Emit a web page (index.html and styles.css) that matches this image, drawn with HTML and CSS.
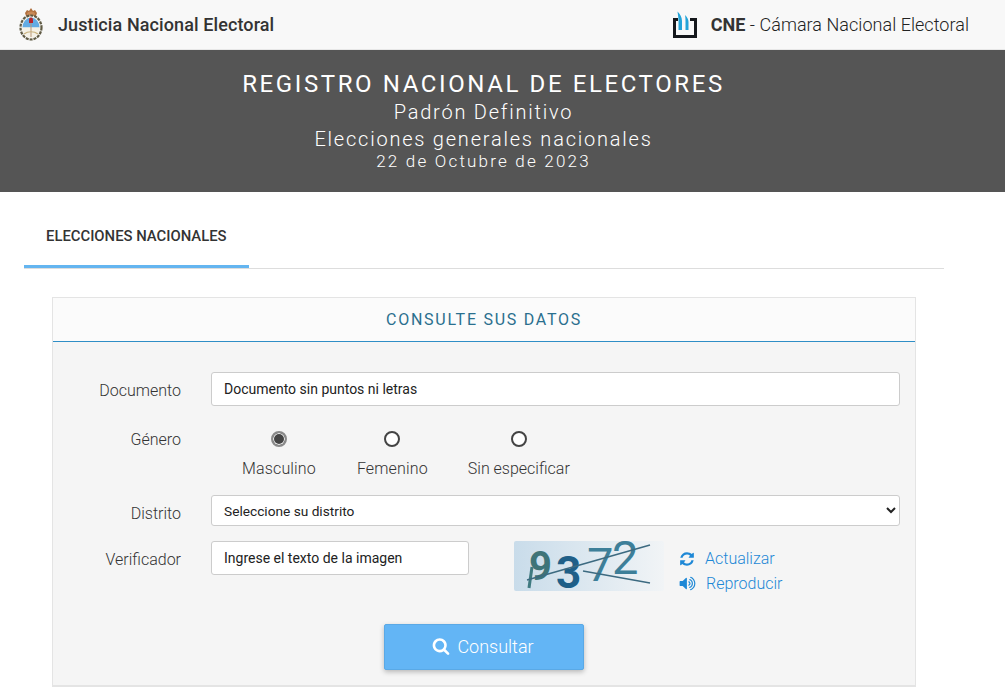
FILE: index.html
```html
<!DOCTYPE html>
<html lang="es">
<head>
    <meta charset="UTF-8">
    <title>Registro Nacional de Electores</title>
    <link rel="stylesheet" href="styles.css">
</head>

<body>

    <header class="topbar">
        <div class="brand">
            <svg class="escudo" viewBox="0 0 24 33" width="24" height="33">
                <!-- sol -->
                <path d="M6 5l2-3 2 1 2-3 2 3 2-1 2 3-1 3H7z" fill="#b0703f"/>
                <ellipse cx="12" cy="6" rx="4" ry="2.500" fill="#c98a58"/>
                <!-- laureles -->
                <ellipse cx="12" cy="19.500" rx="10.500" ry="12" fill="#f6f4ee" stroke="#5f5a44" stroke-width="2.200" stroke-dasharray="3 1"/>
                <path d="M3.500 19.500a8.500 10 0 0 1 17 0z" fill="#62ace4"/>
                <path d="M3.500 19.500a8.500 10 0 0 0 17 0z" fill="#f4f1e6"/>
                <rect x="11.500" y="13" width="1" height="16" fill="#b99a78"/>
                <path d="M10 15v-3.500a2 2 0 0 1 4 0V15z" fill="#b8262c"/>
                <path d="M5 26c4-3 10-3 14 0" fill="none" stroke="#c9b27e" stroke-width="1.200"/>
            </svg>
            <span class="brand-name">Justicia Nacional Electoral</span>
        </div>
        <div class="brand brand-cne">
            <svg class="cne-logo" viewBox="0 0 26 28" width="26" height="28">
                <path d="M6 8.500H2.500V25.500H23.500V8.500H18" fill="none" stroke="#15181c" stroke-width="3"/>
                <path d="M5.500 0.500C8 3 10 6 10 10V19H6.500V10C6.500 7 6 4 5.500 0.500z" fill="#22a3d8"/>
                <path d="M13 4C15 6 16.500 8 16.500 11V19H13.500V11C13.500 9 13.500 6.500 13 4z" fill="#22a3d8"/>
            </svg>
            <span class="cne-name"><b>CNE</b> - Cámara Nacional Electoral</span>
        </div>
    </header>

    <section class="banner">
        <h1>REGISTRO NACIONAL DE ELECTORES</h1>
        <p class="sub">Padrón Definitivo</p>
        <p class="sub">Elecciones generales nacionales</p>
        <p class="fecha">22 de Octubre de 2023</p>
    </section>

    <main class="content">
        <nav class="tabs">
            <a class="tab">ELECCIONES NACIONALES</a>
        </nav>

        <section class="panel">
            <h2 class="panel-title">CONSULTE SUS DATOS</h2>
            <form class="panel-body">
                <div class="row row-doc">
                    <label class="lbl">Documento</label>
                    <input class="field" type="text" placeholder="Documento sin puntos ni letras">
                </div>
                <div class="row row-genero">
                    <label class="lbl">Género</label>
                    <div class="radios">
                        <label class="radio"><input type="radio" name="genero" checked><span>Masculino</span></label>
                        <label class="radio"><input type="radio" name="genero"><span>Femenino</span></label>
                        <label class="radio"><input type="radio" name="genero"><span>Sin especificar</span></label>
                    </div>
                </div>
                <div class="row row-distrito">
                    <label class="lbl">Distrito</label>
                    <select class="field select">
                        <option>Seleccione su distrito</option>
                    </select>
                </div>
                <div class="row row-captcha">
                    <label class="lbl">Verificador</label>
                    <input class="field field-captcha" type="text" placeholder="Ingrese el texto de la imagen">
                    <div class="captcha">
                        <svg class="captcha-img" viewBox="0 0 150 50" width="150" height="50">
                            <defs>
                                <linearGradient id="fondo" x1="0" x2="1">
                                    <stop offset="0" stop-color="#c9dcea"/>
                                    <stop offset="1" stop-color="#f1f4f6"/>
                                </linearGradient>
                            </defs>
                            <rect width="150" height="50" rx="2" fill="url(#fondo)"/>
                            <text x="15" y="39" class="cap-a">9</text>
                            <text x="42" y="47" class="cap-b">3</text>
                            <text x="73" y="40" class="cap-c">7</text>
                            <text x="98" y="33" class="cap-c">2</text>
                            <path d="M18 26L15 47" stroke="#3f7a80" stroke-width="3" fill="none"/>
                            <path d="M13 39L136 4" stroke="#3c6a80" stroke-width="1.500" fill="none"/>
                            <path d="M69 30L136 42" stroke="#3c6a80" stroke-width="1.500" fill="none"/>
                        </svg>
                    </div>
                    <div class="captcha-links">
                        <a class="link">
                            <svg viewBox="0 0 1792 1792" width="16" height="16">
                                <path d="M1639 1056q0 5-1 7-64 268-268 434.500t-478 166.500q-146 0-282.500-55t-243.500-157l-129 129q-19 19-45 19t-45-19-19-45v-448q0-26 19-45t45-19h448q26 0 45 19t19 45-19 45l-137 137q71 66 161 102t187 36q134 0 250-65t186-179q11-17 53-117 8-23 30-23h192q13 0 22.500 9.500t9.500 22.500zm25-800v448q0 26-19 45t-45 19h-448q-26 0-45-19t-19-45 19-45l138-138q-148-137-349-137-134 0-250 65t-186 179q-11 17-53 117-8 23-30 23h-199q-13 0-22.500-9.500t-9.500-22.500v-7q65-268 270-434.500t480-166.500q146 0 284 55.500t245 156.500l130-129q19-19 45-19t45 19 19 45z" fill="#1e88d6"/>
                            </svg>
                            <span>Actualizar</span>
                        </a>
                        <a class="link">
                            <svg viewBox="0 0 1792 1792" width="17" height="17">
                                <path d="M832 352v1088q0 26-19 45t-45 19-45-19l-333-333h-262q-26 0-45-19t-19-45v-384q0-26 19-45t45-19h262l333-333q19-19 45-19t45 19 19 45zm384 544q0 76-42.500 141.500t-112.500 93.500q-10 5-25 5-26 0-45-18.500t-19-45.500q0-21 12-35.500t29-25 34-23 29-36 12-56.500-12-56.500-29-36-34-23-29-25-12-35.500q0-27 19-45.500t45-18.500q15 0 25 5 70 27 112.500 93t42.500 142zm256 0q0 153-85 282.500t-225 188.500q-13 5-25 5-27 0-46-19t-19-45q0-39 39-59 56-29 76-44 74-54 115.500-135.500t41.500-173.500-41.500-173.500-115.500-135.500q-20-15-76-44-39-20-39-59 0-26 19-45t45-19q13 0 26 5 140 59 225 188.500t85 282.500zm256 0q0 230-127 422.500t-338 283.500q-13 5-26 5-26 0-45-19t-19-45q0-36 39-59 7-4 22.500-10.500t22.500-10.500q46-25 82-51 123-91 192-227t69-289-69-289-192-227q-36-26-82-51-7-4-22.500-10.500t-22.500-10.500q-39-23-39-59 0-26 19-45t45-19q13 0 26 5 211 91 338 283.500t127 422.500z" fill="#1e88d6"/>
                            </svg>
                            <span>Reproducir</span>
                        </a>
                    </div>
                </div>
                <div class="acciones">
                    <button class="btn" type="button">
                        <svg viewBox="0 0 1792 1792" width="18" height="18">
                            <path d="M1216 832q0-185-131.500-316.500t-316.500-131.500-316.500 131.500-131.500 316.500 131.500 316.500 316.500 131.500 316.500-131.500 131.500-316.500zm512 832q0 52-38 90t-90 38q-54 0-90-38l-343-342q-179 124-399 124-143 0-273.500-55.500t-225-150-150-225-55.500-273.500 55.500-273.500 150-225 225-150 273.500-55.500 273.500 55.500 225 150 150 225 55.500 273.500q0 220-124 399l343 343q37 37 37 90z" fill="#fff"/>
                        </svg>
                        Consultar
                    </button>
                </div>
            </form>
        </section>
    </main>

</body>

</html>
```

FILE: styles.css
```css
* {
    box-sizing: border-box;
}

body {
    margin: 0;
    background-color: #fff;
    color: #333;
    font-family: Roboto, "Liberation Sans", sans-serif;
    font-size: 16px;
}

.topbar {
    height: 50px;
    padding: 0 36px 0 19px;
    display: flex;
    justify-content: space-between;
    align-items: center;
    background-color: #f8f8f8;
    border-bottom: 1px solid #e7e7e7;
}

.brand {
    display: flex;
    align-items: center;
    gap: 15px;
}

.brand-name {
    font-size: 18px;
    font-weight: 500;
    letter-spacing: 0.1px;
    color: #333;
}

.brand-cne {
    gap: 13px;
}

.cne-name {
    font-size: 18px;
    font-weight: 300;
    letter-spacing: 0.04px;
    color: #222;
}

.cne-name b {
    font-weight: 700;
    color: #333;
}

.banner {
    height: 142px;
    padding: 20px 38px 0 0;
    background-color: #555;
    color: #fff;
    text-align: center;
}

.banner h1 {
    margin: 0;
    font-size: 24px;
    line-height: 29px;
    font-weight: 400;
    letter-spacing: 2.6px;
}

.banner .sub {
    margin: 0;
    font-size: 20px;
    line-height: 27px;
    font-weight: 300;
    letter-spacing: 1.78px;
}

.banner .fecha {
    margin: 0;
    font-size: 17px;
    line-height: 17px;
    font-weight: 300;
    letter-spacing: 2.2px;
}

.content {
    padding: 0 61px 0 24px;
}

.tabs {
    height: 77px;
    border-bottom: 1px solid #ddd;
}

.tab {
    display: block;
    width: 225px;
    height: 76px;
    padding: 36px 0 0 22px;
    font-size: 14.85px;
    line-height: 16px;
    font-weight: 500;
    white-space: nowrap;
    color: #333;
    border-bottom: 3px solid #64b5f0;
}

.panel {
    margin: 28px 28px 0;
    height: 390px;
    background-color: #f5f5f5;
    border: 1px solid #e4e4e4;
    border-bottom-width: 2px;
}

.panel-title {
    margin: 0;
    height: 44px;
    background-color: #fbfbfb;
    border-bottom: 1px solid #2f8ec6;
    font-size: 16px;
    line-height: 43px;
    font-weight: 400;
    letter-spacing: 1.73px;
    color: #2a6f8e;
    text-align: center;
}

.panel-body {
    padding: 30px 15px 0 0;
}

.row {
    display: flex;
    align-items: center;
}

.lbl {
    width: 128px;
    margin-right: 30px;
    flex-shrink: 0;
    text-align: right;
    font-size: 16px;
    font-weight: 300;
}

.row-doc .lbl {
    padding-top: 2px;
}

.field {
    height: 34px;
    padding: 0 12px;
    flex: 1;
    min-width: 0;
    background-color: #fff;
    border: 1px solid #ccc;
    border-radius: 3px;
    font-family: inherit;
    font-size: 14px;
    color: #222;
}

.field::placeholder {
    color: #222;
    opacity: 1;
}

.select {
    height: 31px;
    padding: 0 8px;
    font-size: 13.7px;
}

.row-genero {
    margin-top: 25px;
    align-items: flex-start;
}

.row-genero .lbl {
    line-height: 18px;
}

.radios {
    display: flex;
    gap: 41px;
    margin-left: 31px;
}

.radio {
    display: flex;
    flex-direction: column;
    align-items: center;
    gap: 12px;
    font-size: 16px;
    font-weight: 300;
    letter-spacing: 0.15px;
}

.radio:last-child {
    margin-left: -1px;
    letter-spacing: 0;
}

.radio input {
    appearance: none;
    margin: 0;
    width: 16px;
    height: 16px;
    background-color: #fff;
    border: 2px solid #444;
    border-radius: 50%;
}

.radio input:checked {
    border-color: #8a8a8a;
    background-color: #444;
    box-shadow: inset 0 0 0 1px #f5f5f5;
}

.row-distrito {
    margin-top: 17px;
}

.row-distrito .lbl {
    padding-top: 5px;
}

.row-captcha {
    margin-top: 15px;
    align-items: flex-start;
}

.row-captcha .lbl {
    padding-top: 9px;
}

.field-captcha {
    flex: 0 0 258px;
}

.captcha {
    margin-left: 45px;
    height: 50px;
}

.captcha-img {
    display: block;
    overflow: visible;
}

.captcha-links {
    margin-left: 15px;
    padding-top: 8px;
    display: flex;
    flex-direction: column;
    gap: 6px;
}

.link {
    display: flex;
    align-items: center;
    gap: 10px;
    height: 19px;
    color: #1e88d6;
    font-size: 16px;
    font-weight: 300;
}

.cap-a {
    font: 700 40px Roboto, sans-serif;
    fill: #3e7478;
}

.cap-b {
    font: 700 44px Roboto, sans-serif;
    fill: #1f5f88;
}

.cap-c {
    font: 400 47px Roboto, sans-serif;
    fill: #3d7f99;
}

.acciones {
    margin-top: 31px;
    padding-left: 15px;
    display: flex;
    justify-content: center;
}

.btn {
    width: 200px;
    height: 46px;
    padding: 0 2px 2px 0;
    display: flex;
    justify-content: center;
    align-items: center;
    gap: 7px;
    background-color: #63b5f5;
    border: 1px solid #5aa9e6;
    border-radius: 2px;
    box-shadow: 0 2px 5px rgba(0, 0, 0, 0.25);
    color: #fff;
    font-family: inherit;
    font-size: 18px;
    font-weight: 300;
}
```
